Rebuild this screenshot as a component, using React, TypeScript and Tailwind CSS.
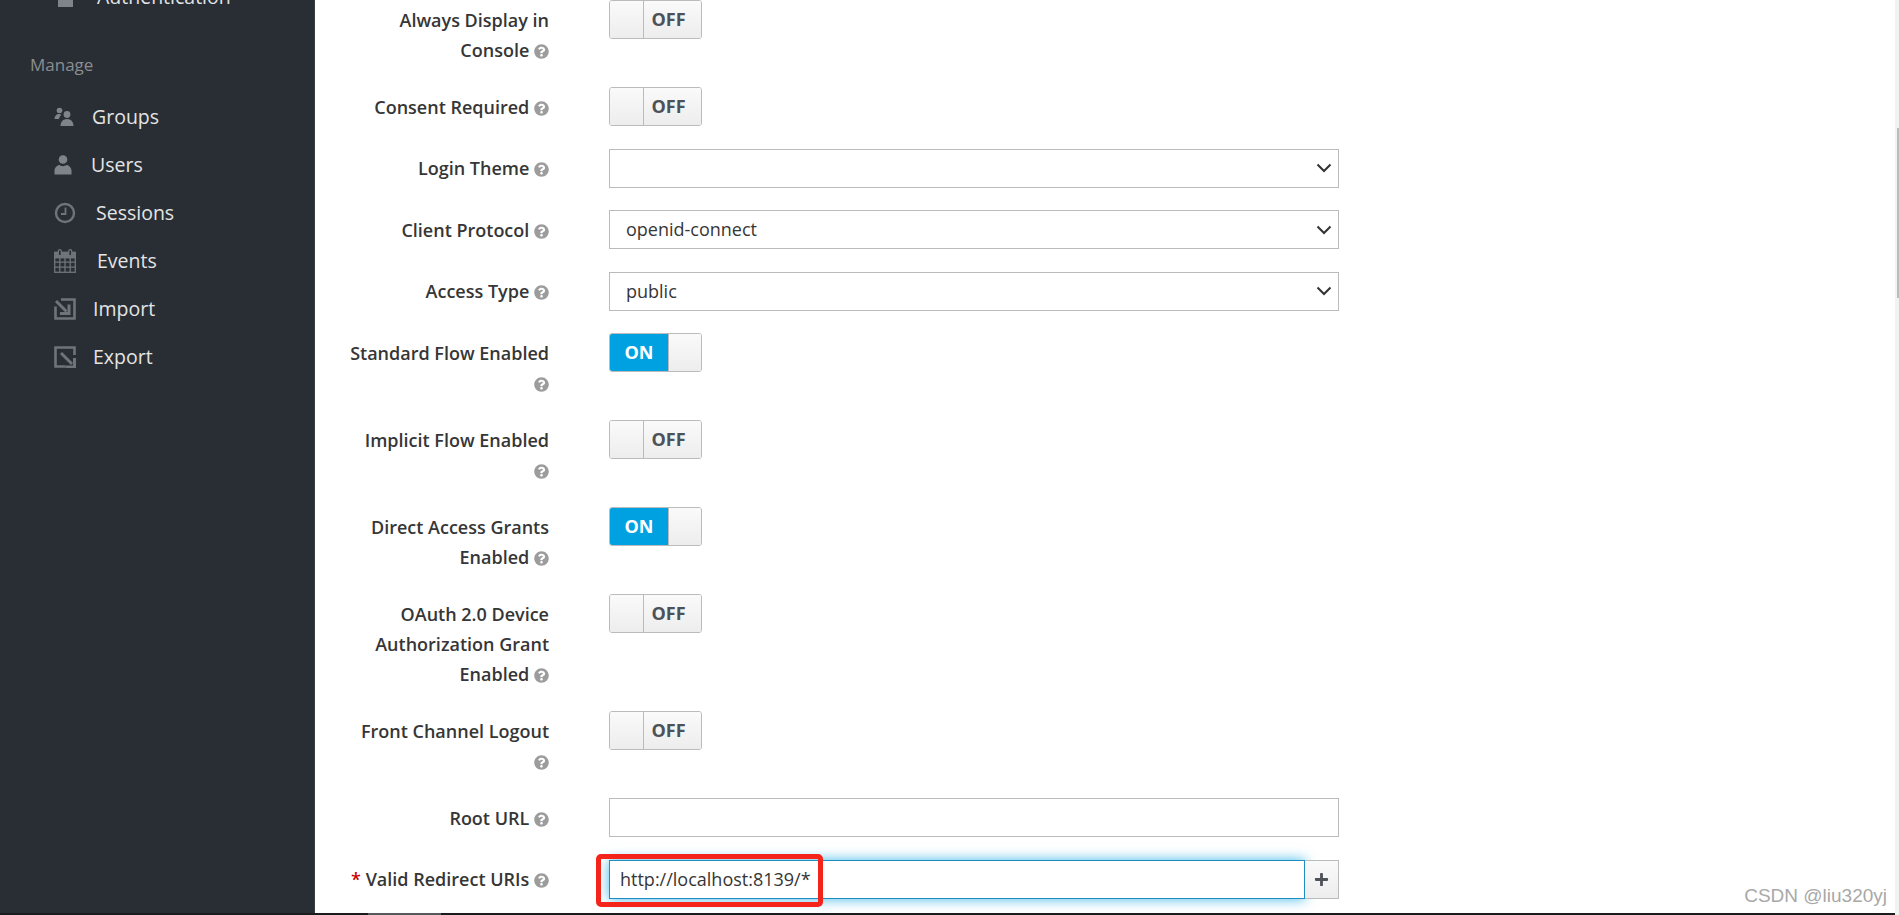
import React from "react";
import { FaQuestionCircle, FaPlus } from "react-icons/fa";

const IconUsers = () => (
  <svg width="20" height="20" viewBox="0 0 20 20" fill="#7f8488">
    <circle cx="5.5" cy="3.5" r="2.8" />
    <path d="M0.5 12c0-3 1.8-5 4.5-5 1 0 1.8.2 2.4.7C6 9 5.2 10.4 5 12z" />
    <circle cx="13" cy="7.5" r="3.4" />
    <path d="M6.5 19c0-4.200 2.500-7 6.500-7s6.500 2.800 6.500 7z" />
  </svg>
);
const IconUser = () => (
  <svg width="18" height="20" viewBox="0 0 18 20" fill="#7f8488">
    <circle cx="9" cy="4.500" r="4.300" />
    <path d="M0.500 19.500v-4c0-3 3-5.500 5-5.500 1 .8 2 1.200 3.500 1.200s2.500-.4 3.500-1.200c2 0 5 2.500 5 5.500v4z" />
  </svg>
);
const IconClock = () => (
  <svg width="22" height="22" viewBox="0 0 22 22" fill="none" stroke="#6f7478">
    <circle cx="11" cy="11" r="9" strokeWidth="2.400" />
    <path d="M11.500 5.500v6.500h-4.500" strokeWidth="1.800" />
  </svg>
);
const IconCalendar = () => (
  <svg width="22" height="24" viewBox="0 0 22 24" fill="none" stroke="#6f7478" strokeWidth="1.300">
    <rect x="0.700" y="3.500" width="20.600" height="19.800" />
    <path d="M0.700 8.500h20.600M0.700 13.200h20.600M0.700 18.200h20.600M5.800 8.500v14.800M11 8.500v14.800M16.200 8.500v14.800" />
    <path d="M0.700 3.500h20.600v5h-20.600z" fill="#6f7478" />
    <rect x="4.300" y="0.700" width="3" height="6" rx="1.500" fill="#292e34" />
    <rect x="14.700" y="0.700" width="3" height="6" rx="1.500" fill="#292e34" />
  </svg>
);
const IconImport = () => (
  <svg width="22" height="22" viewBox="0 0 22 22" fill="none" stroke="#6f7478" strokeWidth="2.600">
    <path d="M7 1.500h13.500v19h-19v-12" />
    <path d="M2 3l10.500 10.500" strokeWidth="3" />
    <path d="M15 6.500v9h-9" strokeWidth="3" />
  </svg>
);
const IconExport = () => (
  <svg width="22" height="22" viewBox="0 0 22 22" fill="none" stroke="#6f7478" strokeWidth="2.600">
    <path d="M20.500 9v-7.500h-19v19h10" />
    <path d="M7 7l11 11" strokeWidth="3" />
    <path d="M20.500 12v9h-9" strokeWidth="3" />
  </svg>
);

const nav = [
  { label: "Groups", icon: <IconUsers />, box: "w-[38px]" },
  { label: "Users", icon: <IconUser />, box: "w-[37px]" },
  { label: "Sessions", icon: <IconClock />, box: "w-[42px]" },
  { label: "Events", icon: <IconCalendar />, box: "w-[43px]" },
  { label: "Import", icon: <IconImport />, box: "w-[39px]" },
  { label: "Export", icon: <IconExport />, box: "w-[39px]" },
];

const Help = () => (
  <FaQuestionCircle className="inline-block align-[-2px] text-[#9c9c9c]" size={15} />
);

function Label({ children, required }: { children: React.ReactNode; required?: boolean }) {
  return (
    <div className="w-[200px] shrink-0 pt-[4.5px] text-right text-[18px] leading-[30px] font-semibold text-[#363636]">
      {required && <span className="text-[#cc0000]">* </span>}
      {children} <Help />
    </div>
  );
}

function Toggle({ on }: { on?: boolean }) {
  return (
    <div className="flex h-[39px] w-[93px] overflow-hidden rounded-[3px] border border-[#bbbbbb] text-[18px] font-bold">
      {on ? (
        <>
          <div className="flex w-[59px] items-center justify-center border-r border-[#bbbbbb] bg-[#00a1e1] text-white">ON</div>
          <div className="flex-1 bg-gradient-to-b from-[#fafafa] to-[#ededed]" />
        </>
      ) : (
        <>
          <div className="w-[34px] border-r border-[#bbbbbb] bg-gradient-to-b from-[#fafafa] to-[#ededed]" />
          <div className="flex flex-1 items-center justify-center bg-gradient-to-b from-[#fafafa] to-[#ededed] pr-[8px] text-[#4d5258]">OFF</div>
        </>
      )}
    </div>
  );
}

function SelectBox({ value }: { value?: string }) {
  return (
    <div className="flex h-[39px] w-[730px] items-center justify-between border border-[#bbbbbb] bg-white pl-4 pr-[6px] text-[18px] text-[#363636]">
      <span>{value}</span>
      <svg width="16" height="10" viewBox="0 0 16 10" fill="none" stroke="#333" strokeWidth="2">
        <path d="M1.500 1.500L8 8l6.500-6.500" />
      </svg>
    </div>
  );
}

function Row({ label, required, children }: { label: React.ReactNode; required?: boolean; children: React.ReactNode }) {
  return (
    <div className="mb-[22.5px] flex gap-[60px]">
      <Label required={required}>{label}</Label>
      <div className="shrink-0">{children}</div>
    </div>
  );
}

export default function App() {
  return (
    <div className="relative flex h-[915px] flex-col overflow-hidden bg-white font-['Open_Sans',sans-serif]">
      <div className="flex min-h-0 flex-1">
        <aside className="w-[315px] shrink-0 border-r border-[#3a3f45] bg-[#292e34]">
          <div className="-mt-[27px] flex h-12 items-center pl-[58px] text-[19.5px] text-[#e4e4e4]">
            <span className="mr-[24px] h-5 w-[15px] bg-[#7f8488]" />
            Authentication
          </div>
          <div className="pl-[30px] pt-[32px] pb-[16px] text-[17px] leading-[24px] text-[#8b8d8f]">Manage</div>
          {nav.map((n) => (
            <div key={n.label} className="flex h-12 items-center pl-[54px] text-[19.5px] text-[#e4e4e4]">
              <span className={`${n.box} flex shrink-0 items-center`}>{n.icon}</span>
              {n.label}
            </div>
          ))}
        </aside>
        <main className="min-w-0 flex-1 pl-[34px]">
          <Row label="Always Display in Console"><Toggle /></Row>
          <Row label="Consent Required"><Toggle /></Row>
          <Row label="Login Theme"><SelectBox /></Row>
          <Row label="Client Protocol"><SelectBox value="openid-connect" /></Row>
          <Row label="Access Type"><SelectBox value="public" /></Row>
          <Row label="Standard Flow Enabled"><Toggle on /></Row>
          <Row label="Implicit Flow Enabled"><Toggle /></Row>
          <Row label="Direct Access Grants Enabled"><Toggle on /></Row>
          <Row label="OAuth 2.0 Device Authorization Grant Enabled"><Toggle /></Row>
          <Row label="Front Channel Logout"><Toggle /></Row>
          <Row label="Root URL">
            <input className="block h-[39px] w-[730px] border border-[#bbbbbb] bg-white px-4 text-[18px] outline-none" defaultValue="" />
          </Row>
          <Row label="Valid Redirect URIs" required>
            <div className="relative flex w-[730px]">
              <input
                className="h-[39px] w-[696px] border border-[#1f8dbf] bg-white px-[10px] text-[18px] text-[#363636] shadow-[0_0_12px_rgba(0,161,225,0.75)] outline-none"
                defaultValue="http://localhost:8139/*"
              />
              <div className="flex h-[39px] w-[34px] items-center justify-center border border-l-0 border-[#bbbbbb] bg-gradient-to-b from-[#fafafa] to-[#ededed] text-[#4d5258]">
                <FaPlus size={15} />
              </div>
              <div className="absolute -left-[13px] -top-[6px] h-[53px] w-[227px] rounded-[5px] border-[5px] border-[#f5241a]" />
            </div>
          </Row>
        </main>
      </div>
      <div className="h-[2px] shrink-0 bg-[#1a1c20] pl-[368px]">
        <div className="h-full w-[73px] bg-[#55585c]" />
      </div>
      <div className="absolute right-0 top-0 h-full w-[4px] bg-[#f2f2f2]">
        <div className="ml-[2px] mt-[128px] h-[170px] w-[2px] bg-[#bdbdbd]" />
      </div>
      <div className="absolute bottom-[5px] right-[12px] font-['Liberation_Sans',sans-serif] text-[19px] text-[#a8a8a8]">CSDN @liu320yj</div>
    </div>
  );
}
